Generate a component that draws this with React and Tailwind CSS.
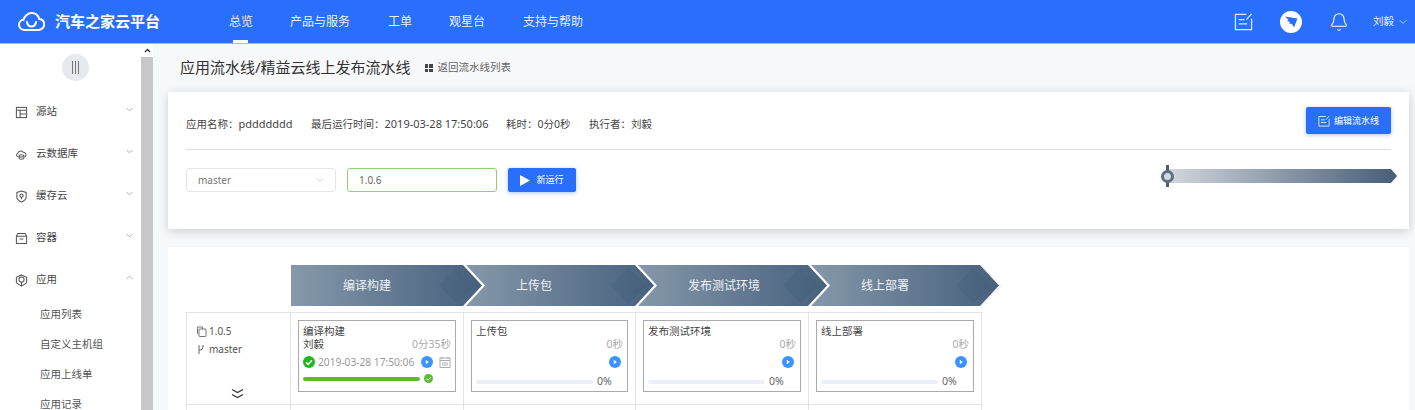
import { ChevronDown, ChevronUp, Bell } from "lucide-react";

const FONT = "font-['Noto_Sans','Noto_Sans_CJK_SC',sans-serif]";

const navItems = ["总览", "产品与服务", "工单", "观星台", "支持与帮助"];
const navWidths = ["w-[61px]", "w-[98px]", "w-[61px]", "w-[74px]", "w-[97px]"];

const menu = [
  { label: "源站", icon: "table" },
  { label: "云数据库", icon: "cloud" },
  { label: "缓存云", icon: "shield" },
  { label: "容器", icon: "box" },
  { label: "应用", icon: "app", open: true },
];
const subMenu = ["应用列表", "自定义主机组", "应用上线单", "应用记录"];

const stages = ["编译构建", "上传包", "发布测试环境", "线上部署"];
const colWidths = ["w-[173px]", "w-[172px]", "w-[173px]", "w-[172px]"];
const stageShapes = [
  "w-[191px] -mr-[19px] pl-[52px] [clip-path:polygon(0_0,172px_0,191px_50%,172px_100%,0_100%)]",
  "w-[194px] -mr-[22px] pl-[53px] [clip-path:polygon(3px_0,172px_0,191px_50%,172px_100%,3px_100%,22px_50%)]",
  "w-[194px] -mr-[21px] pl-[53px] [clip-path:polygon(3px_0,173px_0,192px_50%,173px_100%,3px_100%,22px_50%)]",
  "w-[194px] pl-[53px] [clip-path:polygon(3px_0,172px_0,191px_50%,172px_100%,3px_100%,22px_50%)]",
];

const MenuIcon = ({ type }) => {
  const common = {
    width: 13,
    height: 13,
    viewBox: "0 0 14 14",
    fill: "none",
    stroke: "#555",
    strokeWidth: 1.1,
  };
  if (type === "table")
    return (
      <svg {...common}>
        <rect x="1.5" y="1.5" width="11" height="11" />
        <path d="M1.5 4.5h11M5.5 4.5v8M5.5 8.5h7" />
      </svg>
    );
  if (type === "cloud")
    return (
      <svg {...common}>
        <path d="M3.5 9.5C1.5 9.5.8 6.8 3 6c.2-2.6 4-3.8 5.6-1.4 2.4-.4 4.6 3.2 2 4.9" />
        <ellipse cx="7" cy="8.5" rx="2.6" ry="1.2" />
        <path d="M4.4 8.5v2.6c0 1.4 5.2 1.4 5.2 0V8.5" />
      </svg>
    );
  if (type === "shield")
    return (
      <svg {...common}>
        <path d="M7 1l5 1.6v5C12 10.400 9 12.200 7 13 5 12.200 2 10.400 2 7.600v-5z" />
        <circle cx="7" cy="6" r="1.8" />
        <path d="M7 7.800v2.200" />
      </svg>
    );
  if (type === "box")
    return (
      <svg {...common}>
        <path d="M3 1.500h8l1.500 3v8h-11v-8zM1.500 4.500h11M5 7.500h4" />
      </svg>
    );
  return (
    <svg {...common}>
      <path d="M7 1l5.500 2.500v6L7 13 1.500 9.500v-6z" />
      <circle cx="7" cy="6" r="2.800" />
      <path d="M7 8.800V12.500" />
    </svg>
  );
};

const EditIcon = ({ size, color = "white" }) => (
  <svg width={size} height={size} viewBox="0 0 20 20" fill="none" stroke={color} strokeWidth="1.300">
    <path d="M13 2.500H1.500v16h17V7" />
    <path d="M5 8h6M5 12.500h9M13 8l5.500-6" />
  </svg>
);

const PlayDot = () => (
  <svg width="12" height="12" viewBox="0 0 12 12" className="shrink-0">
    <circle cx="6" cy="6" r="6" fill="#3b93ff" />
    <path d="M4.800 3.800l3 2.200-3 2.200z" fill="white" />
  </svg>
);

const Sidebar = () => (
  <aside className="w-[141px] shrink-0 bg-white">
    <div className="flex justify-center pt-[10px] pb-[10px] pl-[9px]">
      <div className="w-[27px] h-[27px] rounded-full bg-[#e6e9ee] flex items-center justify-center gap-[2px]">
        <span className="w-px h-[13px] bg-[#777]" />
        <span className="w-px h-[13px] bg-[#777]" />
        <span className="w-px h-[13px] bg-[#777]" />
      </div>
    </div>
    {menu.map((item) => (
      <div key={item.label} className="h-[42px] flex items-center pl-[15px] pr-[6px] text-[10.500px] text-[#444]">
        <MenuIcon type={item.icon} />
        <span className="ml-[8px] flex-1">{item.label}</span>
        {item.open ? (
          <ChevronUp size={11} color="#aaa" className="-mt-[6px]" />
        ) : (
          <ChevronDown size={11} color="#aaa" className="-mt-[6px]" />
        )}
      </div>
    ))}
    <div className="-mt-[1px]">
      {subMenu.map((label) => (
        <div key={label} className="h-[30px] flex items-center pl-[40px] text-[10.500px] text-[#555]">
          {label}
        </div>
      ))}
    </div>
  </aside>
);

const Scrollbar = () => (
  <div className="w-[12px] shrink-0 flex flex-col">
    <div className="h-[13px] bg-white flex items-center justify-center">
      <svg width="7" height="5" viewBox="0 0 7 5">
        <path d="M1 4l2.500-2.500L6 4" fill="none" stroke="#333" strokeWidth="1.300" />
      </svg>
    </div>
    <div className="flex-1 bg-[#c8c8c8]" />
  </div>
);

const TaskCard = ({ title, done }) => (
  <div className="h-[72px] border border-[#aaaaaa] px-[4px] pt-[4px] text-[10.500px] leading-[13px] text-[#444] bg-white">
    <div>{title}</div>
    <div className="flex justify-between">
      <span>{done ? "刘毅" : ""}</span>
      <span className="text-[#aaa]">{done ? "0分35秒" : "0秒"}</span>
    </div>
    <div className="h-[18px] mt-[2px] flex items-center text-[#999]">
      {done ? (
        <>
          <svg width="12" height="12" viewBox="0 0 12 12" className="shrink-0">
            <circle cx="6" cy="6" r="6" fill="#1fb81f" />
            <path d="M3 6.200l2.200 2.200L9 4.200" fill="none" stroke="white" strokeWidth="1.500" />
          </svg>
          <span className="ml-[3px] w-[103px] text-[10.200px] whitespace-nowrap">2019-03-28 17:50:06</span>
          <PlayDot />
          <svg width="12" height="12" viewBox="0 0 12 12" className="ml-[6px] shrink-0" fill="none" stroke="#999" strokeWidth="0.800">
            <rect x="1" y="2" width="10" height="9.500" />
            <path d="M1 4.500h10M3 1v2M9 1v2M3 7h6M3 9h6" />
          </svg>
        </>
      ) : (
        <span className="ml-auto mr-[2px] flex">
          <PlayDot />
        </span>
      )}
    </div>
    <div className="flex items-center mt-[4px]">
      <div className={`w-[117px] h-[4px] rounded-full ${done ? "bg-[#5dbb33]" : "bg-[#edf0f6]"}`} />
      {done ? (
        <svg width="9" height="9" viewBox="0 0 9 9" className="ml-[4px] -mt-[1px]">
          <circle cx="4.500" cy="4.500" r="4.500" fill="#5dbb33" />
          <path d="M2.300 4.600l1.600 1.600 2.800-3" fill="none" stroke="white" strokeWidth="1" />
        </svg>
      ) : (
        <span className="ml-[4px] text-[#666]">0%</span>
      )}
    </div>
  </div>
);

const App = () => (
  <div className={`w-[1415px] h-[410px] overflow-hidden flex flex-col bg-[#f7f8fa] ${FONT}`}>
    <header className="h-[44px] shrink-0 bg-[#2a6ffb] border-b border-[#9cbcff] flex items-center text-white">
      <div className="w-[229px] shrink-0 flex items-center pl-[18px]">
        <svg width="27" height="20" viewBox="0 0 27 20" fill="none" stroke="white" strokeWidth="2">
          <path d="M7 18C3.500 18 1 15.800 1 12.800c0-2.800 2-4.800 4.500-5C6.500 3.800 10 1 13.500 1c3.800 0 6.800 2.500 7.700 6 3 .300 5 2.600 5 5.400 0 3-2.500 5.600-6 5.600z" />
          <path d="M9 10c.500 3 2.500 4.500 4.500 4.500S17.500 13 18 10" strokeLinecap="round" />
        </svg>
        <span className="ml-[10px] text-[15px] font-bold whitespace-nowrap">汽车之家云平台</span>
      </div>
      <nav className="flex h-full text-[12px]">
        {navItems.map((label, i) => (
          <div key={label} className={`${navWidths[i]} h-full relative flex items-center whitespace-nowrap text-[#e8efff]`}>
            {label}
            {i === 0 && <span className="absolute bottom-0 left-[4px] w-[15px] h-[3px] bg-white" />}
          </div>
        ))}
      </nav>
      <div className="ml-auto flex items-center pr-[6px]">
        <EditIcon size={19} color="#dfe8ff" />
        <div className="ml-[27px] w-[22px] h-[22px] rounded-full bg-white flex items-center justify-center">
          <svg width="13" height="13" viewBox="0 0 13 13">
            <path d="M0 1.500l12.500 2-3.500 9-2-3.500-3-.500 1-1.500-3-1 1.500-1z" fill="#2a6ffb" />
          </svg>
        </div>
        <Bell size={20} strokeWidth={1.300} className="ml-[27px]" />
        <span className="ml-[24px] text-[10.500px] text-[#e8efff]">刘毅</span>
        <ChevronDown size={12} className="ml-[3px]" strokeWidth={1.300} />
      </div>
    </header>

    <div className="flex-1 flex min-h-0">
      <Sidebar />
      <Scrollbar />
      <main className="flex-1 min-w-0 pl-[15px] pr-[6px]">
        <div className="h-[48px] flex items-center pl-[12px] pb-[2px]">
          <h1 className="text-[15px] font-normal text-[#333] whitespace-nowrap">应用流水线/精益云线上发布流水线</h1>
          <span className="ml-[14px] mt-[2px] grid grid-cols-2 gap-[1px]">
            <i className="w-[3.500px] h-[3.500px] bg-[#444]" />
            <i className="w-[3.500px] h-[3.500px] bg-[#444]" />
            <i className="w-[3.500px] h-[3.500px] bg-[#444]" />
            <i className="w-[3.500px] h-[3.500px] bg-[#444]" />
          </span>
          <span className="ml-[5px] mt-[2px] text-[10.500px] text-[#666]">返回流水线列表</span>
        </div>

        <section className="h-[137px] bg-white shadow-[0_2px_10px_rgba(0,0,0,0.18)] px-[18px]">
          <div className="h-[58px] border-b border-[#dcdcdc] flex items-center text-[10.500px] text-[#444] pt-[8px]">
            <span className="w-[125px] whitespace-nowrap">
              {"应用名称\uFF1A"}<span className="text-[11px]">pddddddd</span>
            </span>
            <span className="w-[195px] whitespace-nowrap">
              {"最后运行时间\uFF1A"}<span className="text-[11px]">2019-03-28 17:50:06</span>
            </span>
            <span className="w-[83px] whitespace-nowrap">{"耗时\uFF1A0分0秒"}</span>
            <span className="whitespace-nowrap">{"执行者\uFF1A刘毅"}</span>
            <button className="ml-auto -mt-[8px] h-[27px] w-[85px] rounded-[2px] bg-[#2a6ffb] text-white text-[9px] flex items-center justify-center gap-[4px] shadow-[0_1px_4px_rgba(42,111,251,0.4)]">
              <EditIcon size={12} />
              编辑流水线
            </button>
          </div>
          <div className="flex items-center mt-[18px]">
            <div className="w-[150px] h-[24px] border border-[#e6e6e6] rounded-[3px] flex items-center justify-between pl-[11px] pr-[9px] text-[10px] text-[#777]">
              master
              <ChevronDown size={12} color="#bbb" strokeWidth={1.300} />
            </div>
            <div className="ml-[11px] w-[150px] h-[24px] border border-[#8fd16e] rounded-[3px] flex items-center pl-[11px] text-[10px] text-[#666]">
              1.0.6
            </div>
            <button className="ml-[11px] w-[68px] h-[24px] rounded-[2px] bg-[#2a6ffb] text-white text-[9px] flex items-center justify-center gap-[6px] shadow-[0_1px_4px_rgba(42,111,251,0.4)]">
              <svg width="10" height="11" viewBox="0 0 10 11">
                <path d="M0 0l10 5.500L0 11z" fill="white" />
              </svg>
              新运行
            </button>
            <div className="ml-auto mr-[-6px] -mt-[8px] w-[236px] h-[22px] relative flex items-center">
              <div className="ml-[6px] flex-1 h-[14px] bg-gradient-to-r from-[#d3d8de] to-[#475e77] [clip-path:polygon(0_0,calc(100%-6px)_0,100%_50%,calc(100%-6px)_100%,0_100%)]" />
              <span className="absolute left-[5px] top-0 w-[3px] h-[22px] bg-[#4a6078]" />
              <span className="absolute left-0 top-[4.500px] w-[13px] h-[13px] rounded-full bg-[#d5d9de] border-[3px] border-[#5a6f87]" />
            </div>
          </div>
        </section>

        <section className="mt-[18px] h-[200px] bg-white pl-[18px] pt-[18px]">
          <div className="relative flex ml-[105px] h-[41px]">
            {stages.map((label, i) => (
              <div
                key={label}
                className={`relative h-full shrink-0 flex items-center overflow-hidden text-[12px] text-[#eef1f5] bg-gradient-to-r from-[#8799ab] to-[#46607d] ${stageShapes[i]}`}
              >
                {label}
                <span className="absolute top-[8px] left-[153px] w-[25px] h-[25px] rotate-45 bg-[#3f5a78]/25" />
              </div>
            ))}
            <svg width="24" height="41" viewBox="0 0 24 41" fill="none" stroke="#ececec" className="absolute left-[689px] top-0">
              <path d="M1 0l21 20.500L1 41" />
            </svg>
          </div>
          <div className="mt-[6px] w-[796px] border border-[#e3e3e3] flex h-[93px] text-[#555]">
            <div className="w-[104px] border-r border-[#e3e3e3] pl-[9px] pt-[11px] text-[10px] relative">
              <div className="flex items-center h-[14px]">
                <svg width="11" height="11" viewBox="0 0 11 11" fill="none" stroke="#666" strokeWidth="0.900">
                  <rect x="3" y="3" width="7" height="7.500" rx="0.500" />
                  <path d="M1.500 8V1h5v2" />
                </svg>
                <span className="ml-[2px]">1.0.5</span>
              </div>
              <div className="flex items-center h-[14px] mt-[4px]">
                <svg width="11" height="11" viewBox="0 0 11 11" fill="none" stroke="#666" strokeWidth="1">
                  <path d="M3 1v9M3 6c3 0 4-1 4-4M7 2.500V1" />
                </svg>
                <span className="ml-[2px]">master</span>
              </div>
              <svg width="13" height="11" viewBox="0 0 13 11" fill="none" stroke="#333" strokeWidth="1.200" className="absolute left-[44px] bottom-[5px]">
                <path d="M1 1.500l5.500 3 5.500-3M1 6.500l5.500 3 5.500-3" />
              </svg>
            </div>
            {stages.map((label, i) => (
              <div key={label} className={`${colWidths[i]} px-[7px] pt-[7px] ${i < 3 ? "border-r border-[#e3e3e3]" : ""}`}>
                <TaskCard title={label} done={i === 0} />
              </div>
            ))}
          </div>
          <div className="w-[796px] h-[8px] flex border-x border-[#e3e3e3]">
            <div className="w-[104px] border-r border-[#e3e3e3]" />
            {stages.map((label, i) => (
              <div key={label} className={`${colWidths[i]} ${i < 3 ? "border-r border-[#e3e3e3]" : ""}`} />
            ))}
          </div>
        </section>
      </main>
    </div>
  </div>
);

export default App;
